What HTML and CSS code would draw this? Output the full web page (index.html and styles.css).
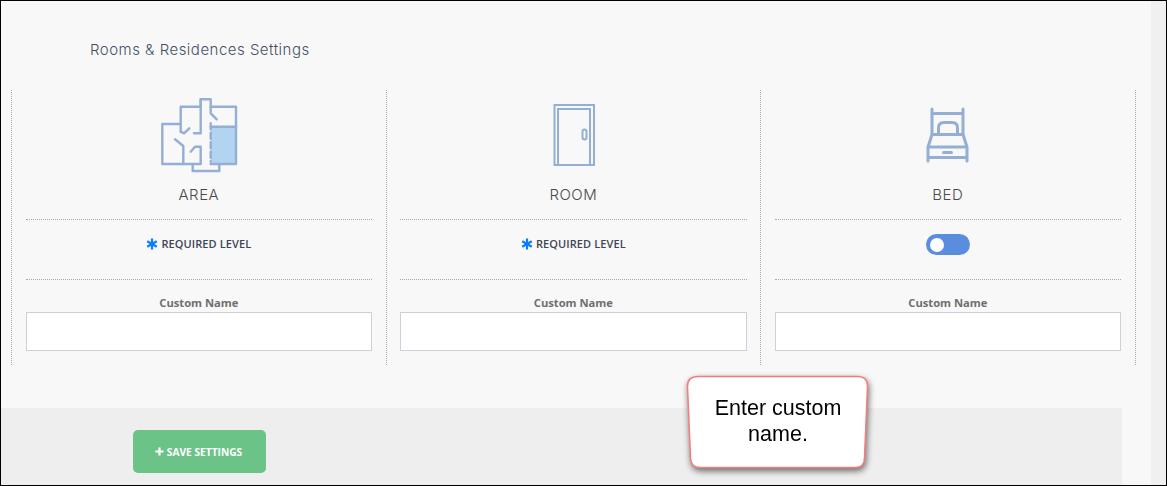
FILE: index.html
```html
<!DOCTYPE html>
<html lang="en">
<head>
<meta charset="utf-8">
<title>Rooms &amp; Residences Settings</title>
<link rel="stylesheet" href="styles.css">
</head>
<body>
<div class="frame">
  <main class="panel">
    <h1 class="title">Rooms &amp; Residences Settings</h1>
    <div class="columns">
      <section class="col">
        <div class="icon-box">
          <svg class="icon" viewBox="0 0 80 80" fill="none" stroke="#94aed6" stroke-width="2.4" stroke-linecap="round" stroke-linejoin="round">
            <rect x="51.7" y="31.7" width="25.3" height="37.3" fill="#b3d4f0" stroke="none"/>
            <path d="M21.7 29H3.3V69H41.7V51.7H36L31.7 56.7"/>
            <path d="M21.7 36.7V11.7H41.7V4.3H51.7V11.7H77V69H51.7"/>
            <path d="M41.7 4.3V38.3H35"/>
            <path d="M21.7 36.7L25 38.3L30.3 33.3"/>
            <path d="M51.7 11.7V18.3L57.7 24.3"/>
            <path d="M51.7 31.7H77"/>
            <path d="M51.7 28.3V66.7" stroke-dasharray="6 3.5"/>
            <path d="M16 44.3L24.3 51V69"/>
            <path d="M33.7 69V76H60.3V69"/>
          </svg>
        </div>
        <h2 class="label">AREA</h2>
        <div class="level"><svg class="star" viewBox="0 0 12 12"><path d="M6 .5V11.5M1.2 3.2L10.8 8.8M10.8 3.2L1.2 8.8" stroke="#0a7cff" stroke-width="2.2"/></svg><span>REQUIRED LEVEL</span></div>
        <label class="field"><span class="field-name">Custom Name</span><input class="field-input" type="text"></label>
      </section>
      <section class="col">
        <div class="icon-box">
          <svg class="icon" viewBox="0 0 80 80" fill="none" stroke="#94aed6" stroke-width="2">
            <path d="M21.500 70V10H61V70H21.500Z"/>
            <path d="M25 70V14H57V70"/>
            <rect x="49.500" y="34.500" width="4" height="10" rx="2"/>
          </svg>
        </div>
        <h2 class="label">ROOM</h2>
        <div class="level"><svg class="star" viewBox="0 0 12 12"><path d="M6 .5V11.5M1.2 3.2L10.8 8.8M10.8 3.2L1.2 8.8" stroke="#0a7cff" stroke-width="2.2"/></svg><span>REQUIRED LEVEL</span></div>
        <label class="field"><span class="field-name">Custom Name</span><input class="field-input" type="text"></label>
      </section>
      <section class="col">
        <div class="icon-box">
          <svg class="icon" viewBox="0 0 80 80" fill="none" stroke="#94aed6" stroke-width="3" stroke-linecap="round" stroke-linejoin="round">
            <path d="M24 14V39.500M55 14V39.500M24 18.500H55"/>
            <path d="M30.500 38V33Q30.500 27.500 36 27.500H44Q49.500 27.500 49.500 33V38"/>
            <path d="M24 39.500H55L59 52V66M24 39.500L20 52V66M20 52H59M20 62.500H59"/>
            <path d="M35.500 57.500H43.500"/>
          </svg>
        </div>
        <h2 class="label">BED</h2>
        <div class="level"><span class="toggle"><span class="knob"></span></span></div>
        <label class="field"><span class="field-name">Custom Name</span><input class="field-input" type="text"></label>
      </section>
    </div>
    <footer class="footer">
      <button class="save" type="button"><svg class="plus" viewBox="0 0 10 10"><path d="M5 .5V9.500M.5 5H9.500" stroke="#fff" stroke-width="2.4"/></svg>SAVE SETTINGS</button>
    </footer>
  </main>
  <div class="strip"></div>
  <aside class="callout">
    <svg class="callout-shape" viewBox="0 0 184 96" preserveAspectRatio="none">
      <path d="M12 1.500H172Q181.500 1.500 181.500 11L178.500 83Q178.500 92.500 169 92.500H14Q5 92.500 4.500 83L1.500 11Q1.500 1.500 12 1.500Z" fill="#fff" stroke="#f47c7c" stroke-width="1.5"/>
    </svg>
    <p class="callout-text">Enter custom name.</p>
  </aside>
</div>
</body>
</html>
```
FILE: styles.css
```css
* { box-sizing: border-box; }
html, body { margin: 0; padding: 0; }
body { background: #f8f8f8; }
.frame {
  position: relative;
  display: flex;
  width: 1167px;
  height: 486px;
  border: 1px solid #000;
  overflow: hidden;
  background: #f8f8f8;
}
.panel { width: 1150px; flex: none; display: flex; flex-direction: column; }
.strip { flex: 1; background: #f0f0f0; }
.title {
  margin: 0;
  padding: 39px 0 0 89px;
  height: 89px;
  font: 300 15px/20px Inter, "Open Sans", sans-serif;
  color: #465165;
  letter-spacing: .49px;
}
.columns {
  display: grid;
  grid-template-columns: repeat(3, 374.5px);
  width: 1125px;
  height: 275px;
  margin-left: 10px;
  border-right: 1px dotted #aaa;
}
.col {
  border-left: 1px dotted #aaa;
  padding: 0 13.5px 0 13.7px;
  display: flex;
  flex-direction: column;
}
.icon-box { height: 95px; padding-top: 5px; display: flex; justify-content: center; }
.icon { width: 80px; height: 80px; display: block; }
.label {
  margin: 0;
  height: 35px;
  text-align: center;
  font: 300 15px/20px Inter, "Open Sans", sans-serif;
  letter-spacing: .5px;
  color: #4a4a4a;
  border-bottom: 1px dotted #aaa;
}
.level {
  height: 60px;
  display: flex;
  align-items: center;
  justify-content: center;
  gap: 3px;
  font: 600 11px/14px "Open Sans", sans-serif;
  letter-spacing: .1px;
  color: #3d4655;
  border-bottom: 1px dotted #aaa;
  padding-bottom: 11px;
}
.star { width: 12px; height: 12px; }
.toggle {
  width: 44px;
  height: 21px;
  border-radius: 11px;
  background: #5b8ddf;
  display: flex;
  align-items: center;
  padding-left: 4px;
  margin-top: 1px;
}
.knob { width: 14px; height: 14px; border-radius: 50%; background: #fff; }
.field { display: flex; flex-direction: column; }
.field-name {
  height: 32px;
  padding-top: 15px;
  text-align: center;
  font: 700 11.2px/16px "Open Sans", sans-serif;
  color: #6f6f6f;
}
.field-input {
  height: 39px;
  width: 100%;
  border: 1px solid #ccd0da;
  background: #fff;
  padding: 0 8px;
}
.footer {
  margin-top: 43px;
  width: 1121px;
  flex: 1;
  background: #eee;
  padding: 22px 0 0 132px;
}
.save {
  width: 133px;
  height: 43px;
  border: 0;
  border-radius: 5px;
  background: #6cc387;
  color: #fff;
  font: 700 10.2px/12px "Open Sans", sans-serif;
  display: flex;
  align-items: center;
  justify-content: center;
  gap: 3px;
  padding: 0 2px 0 0;
}
.plus { width: 9px; height: 9px; }
.callout {
  position: absolute;
  left: 685px;
  top: 374px;
  width: 184px;
  height: 96px;
  filter: drop-shadow(1px 3px 3px rgba(0, 0, 0, .55));
}
.callout-shape { position: absolute; inset: 0; width: 100%; height: 100%; }
.callout-text {
  position: relative;
  margin: 0;
  padding: 20px 24px 0;
  text-align: center;
  font: 400 21.5px/26px "Liberation Sans", Arial, sans-serif;
  color: #000;
}
```
